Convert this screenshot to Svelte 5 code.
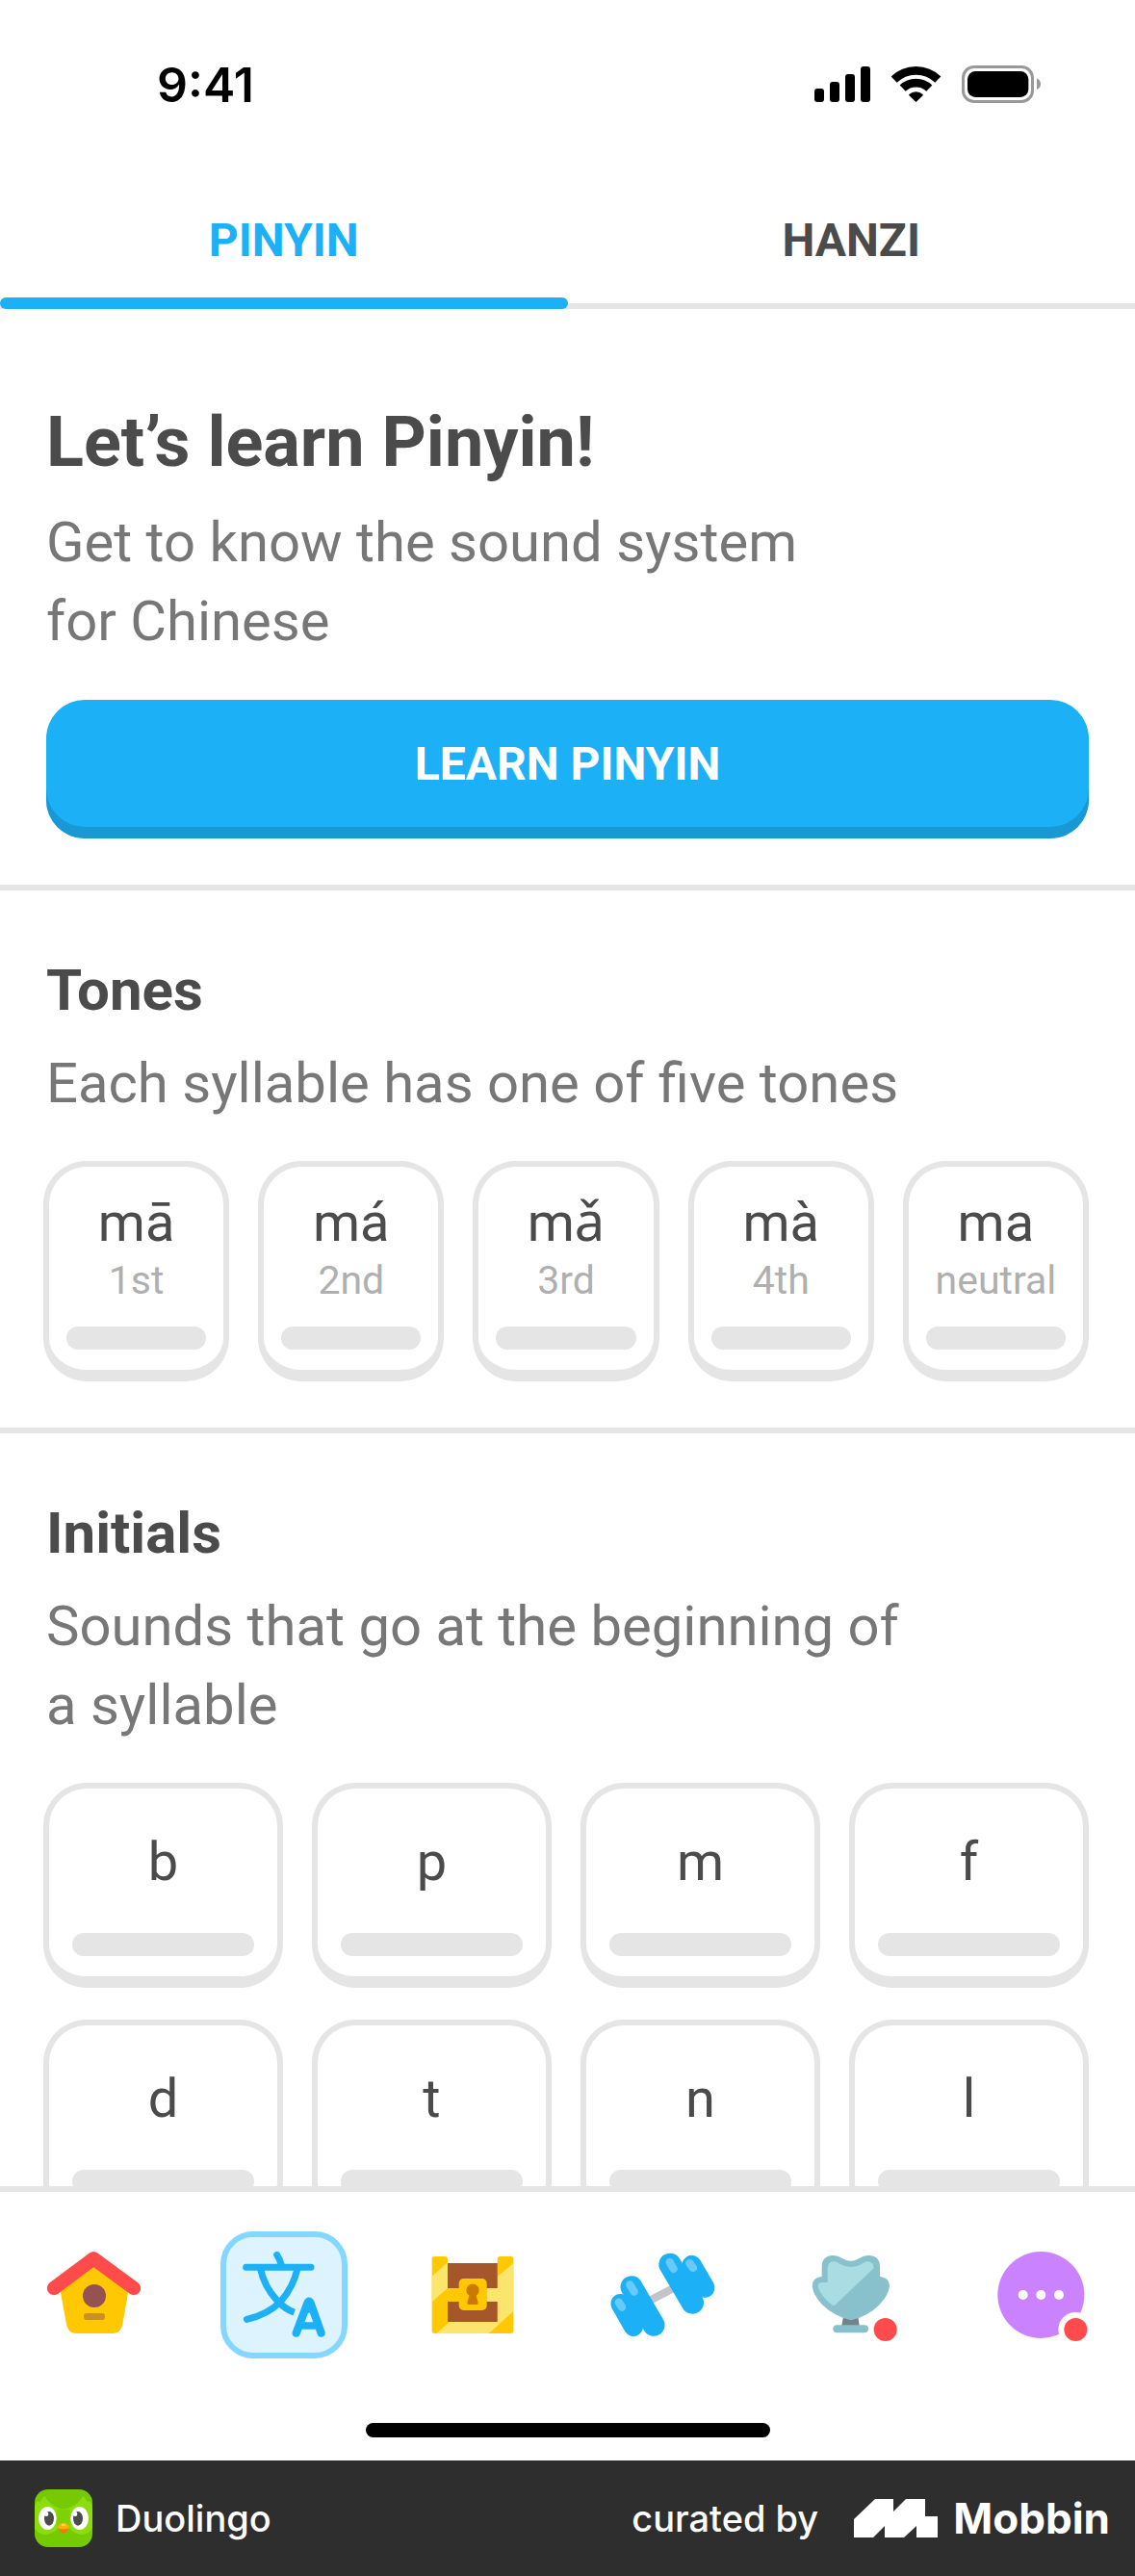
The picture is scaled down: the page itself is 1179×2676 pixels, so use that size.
<script>
  const tones = [
    { syllable: 'mā', label: '1st' },
    { syllable: 'má', label: '2nd' },
    { syllable: 'mǎ', label: '3rd' },
    { syllable: 'mà', label: '4th' },
    { syllable: 'ma', label: 'neutral' }
  ];
  const initials = ['b', 'p', 'm', 'f', 'd', 't', 'n', 'l'];
</script>

<div class="screen">
  <header class="status">
    <span class="time">9:41</span>
    <svg class="status-icons" viewBox="48 54 708 118" aria-hidden="true">
      <rect x="48" y="126" width="30" height="42" rx="9" />
      <rect x="96" y="105" width="30" height="63" rx="9" />
      <rect x="144" y="81" width="30" height="87" rx="9" />
      <rect x="192" y="57" width="30" height="111" rx="9" />
      <g fill="none" stroke="#000" stroke-width="26">
        <path d="M296 98A98 98 0 0 1 433 98" />
        <path d="M323 125A60 60 0 0 1 406 125" />
      </g>
      <path d="M364.500 165L345 146A28 28 0 0 1 384 146Z" stroke="#000" stroke-width="5" stroke-linejoin="round" />
      <rect x="511.500" y="58.500" width="216" height="108" rx="34" fill="none" stroke="#999" stroke-width="9" />
      <rect x="525" y="72" width="190" height="81" rx="25" />
      <path d="M741 94Q753 100 753 112Q753 124 741 129Z" fill="#999" />
    </svg>
  </header>

  <nav class="tabs" aria-label="Writing system">
    <button class="tab active" aria-current="true">PINYIN</button>
    <button class="tab">HANZI</button>
  </nav>

  <main>
    <section class="intro">
      <h1>Let’s learn Pinyin!</h1>
      <p>Get to know the sound system<br />for Chinese</p>
      <button class="primary">LEARN PINYIN</button>
    </section>

    <section>
      <h2>Tones</h2>
      <p>Each syllable has one of five tones</p>
      <div class="grid five">
        {#each tones as tone}
          <button class="card tone">
            <span class="syllable">{tone.syllable}</span>
            <span class="label">{tone.label}</span>
            <span class="progress"></span>
          </button>
        {/each}
      </div>
    </section>

    <section>
      <h2>Initials</h2>
      <p>Sounds that go at the beginning of<br />a syllable</p>
      <div class="grid four">
        {#each initials as letter}
          <button class="card initial">
            <span class="syllable">{letter}</span>
            <span class="progress"></span>
          </button>
        {/each}
      </div>
    </section>
  </main>

  <div class="bottom">
    <nav class="bar" aria-label="Main">
      <button class="item" aria-label="Learn">
        <svg viewBox="96 174 396 396">
          <path d="M188 360L292 275L400 360L382 463Q377 492 352 492H237Q212 492 207 463Z" fill="#ffc800" />
          <path d="M168 351L291.500 259L417 351" fill="none" stroke="#ff4b4b" stroke-width="43" stroke-linecap="round" stroke-linejoin="round" />
          <circle cx="294" cy="375" r="36" fill="#945252" />
          <rect x="261" y="429" width="66" height="21" rx="10" fill="#c98f29" />
        </svg>
      </button>
      <button class="item selected" aria-label="Characters" aria-current="page">
        <svg viewBox="705 192 360 360">
          <g fill="none" stroke="#1cb0f6" stroke-width="21" stroke-linecap="round" stroke-linejoin="round">
            <path d="M767 286H969" />
            <path d="M863 247Q873 262 877 280" />
            <path d="M927 290Q914 346 876 391Q836 433 769 448" />
          </g>
          <path d="M811 288Q823 346 864 390Q888 416 917 427" fill="none" stroke="#1cb0f6" stroke-width="21" />
          <g fill="none" stroke="#1cb0f6" stroke-linecap="round" stroke-linejoin="round">
            <path d="M923 491L958 398Q963 386 968 398L1001 491" stroke-width="25" />
            <path d="M938 468H988" stroke-width="22" />
          </g>
          <path d="M950 402L963 392L976 402L968 428H958Z" fill="#1cb0f6" />
        </svg>
      </button>
      <button class="item" aria-label="Quests">
        <svg viewBox="76 174 396 396">
          <path d="M156 252H187Q196 252 196 261V273H351V261Q351 252 360 252H392Q401 252 401 261V483Q401 492 392 492H156Q147 492 147 483V261Q147 252 156 252Z" fill="#ffc800" />
          <path d="M147 314L196 271V351L147 394ZM351 315L401 273V423L324 492H161L202 456H351V393H318V351H351Z" fill="#fbe56d" />
          <path d="M196 273H351V351H196ZM196 393H351V456H196Z" fill="#a5572b" />
          <rect x="231" y="321" width="87" height="99" rx="15" fill="#ffc800" />
          <path d="M263 374A20 20 0 1 1 285 374L291 396Q292 402 286 402H262Q256 402 257 396Z" fill="#cd7900" />
        </svg>
      </button>
      <button class="item" aria-label="Practice">
        <svg viewBox="665 174 396 396">
          <path d="M820 392L905 347" stroke="#c4c3c9" stroke-width="25" />
          <g stroke="#1cb0f6" stroke-linecap="round">
            <path d="M767 347L836 466" stroke-width="69" />
            <path d="M732 399L773 471" stroke-width="60" />
            <path d="M887 277L957 396" stroke-width="70" />
            <path d="M955 279L996 350" stroke-width="61" />
            <path d="M790 440L800 455M970 350L975 360" stroke-width="30" />
          </g>
          <g stroke="#68caf9" stroke-linecap="round" stroke-width="25">
            <path d="M762 340L775 362" />
            <path d="M727 395L737 410" />
            <path d="M886 270L898 291" />
            <path d="M948 273L959 288" />
          </g>
        </svg>
      </button>
      <button class="item" aria-label="Leagues">
        <svg viewBox="118 174 396 396">
          <path d="M292 440H338L342 468H287Z" fill="#6f8388" />
          <path d="M225 315V285Q225 249 261 249Q275 249 290 259Q315 274 340 259Q355 249 370 249Q406 249 406 285V315Q436 318 436 345Q432 374 405 402Q368 440 316 451Q262 438 226 402Q198 372 195 345Q195 318 225 315Z" fill="#88c0cb" />
          <path d="M243 333V289Q244 268 262 268Q270 268 281 275Q316 295 350 275Q360 268 370 268Q386 270 387 289L267 403Q261 408 256 403Q222 377 213 346Q212 334 225 333Z" fill="#aadde3" />
          <rect x="260" y="466" width="110" height="24" rx="12" fill="#88c0cb" />
          <circle cx="423" cy="480" r="36" fill="#ff4b4b" />
        </svg>
      </button>
      <button class="item" aria-label="More">
        <svg viewBox="707 174 396 396">
          <circle cx="906" cy="372" r="135" fill="#cb82ff" />
          <g fill="#fff">
            <circle cx="850" cy="372" r="15" />
            <circle cx="906" cy="372" r="15" />
            <circle cx="962" cy="372" r="15" />
            <circle cx="1014" cy="480" r="54" />
          </g>
          <circle cx="1014" cy="480" r="36" fill="#ff4b4b" />
        </svg>
      </button>
    </nav>
    <div class="home"></div>
  </div>

  <footer>
    <svg class="owl" viewBox="30 30 180 180" aria-hidden="true">
      <defs>
        <clipPath id="tile"><rect x="30" y="30" width="180" height="180" rx="42" /></clipPath>
      </defs>
      <g clip-path="url(#tile)">
        <path d="M30 30H210V210H30Z" fill="#75ca02" />
        <path d="M30 84L38 66L46 70L60 50Q82 84 108 89Q120 92 132 89Q158 84 182 50L194 70L202 66L210 84V152Q190 178 162 168Q148 164 138 150H102Q92 164 78 168Q50 178 30 152Z" fill="#8bdd0c" />
        <path d="M100 92H140V150H100Z" fill="#7ed104" />
        <ellipse cx="70" cy="120" rx="28" ry="36" fill="#fff" />
        <ellipse cx="170" cy="120" rx="28" ry="36" fill="#fff" />
        <ellipse cx="75" cy="121" rx="15" ry="22" fill="#4b4b4b" />
        <ellipse cx="165" cy="121" rx="15" ry="22" fill="#4b4b4b" />
        <circle cx="66" cy="107" r="7" fill="#fff" />
        <circle cx="156" cy="107" r="7" fill="#fff" />
        <path d="M105 150Q120 144 135 150L132 160Q120 174 108 160Z" fill="#f47b08" />
        <path d="M101 150Q106 134 120 134Q134 134 139 150Q120 158 101 150Z" fill="#ffb100" />
        <ellipse cx="120" cy="141" rx="7" ry="4" fill="#ffd35c" />
      </g>
    </svg>
    <span class="app">Duolingo</span>
    <span class="curated">curated by</span>
    <svg class="mark" viewBox="0 0 87 40" aria-hidden="true">
      <path d="M0 21L22 0H41V13L54 0H74V18H87V40H65V28L52 40H32V28L20 40H0Z" fill="#fff" />
    </svg>
    <span class="brand">Mobbin</span>
  </footer>
</div>

<style>
  :global(body) {
    margin: 0;
    background: #fff;
  }

  .screen {
    display: flex;
    flex-direction: column;
    height: 100vh;
    font-family: Roboto, 'Noto Sans', sans-serif;
    color: #4b4b4b;
    overflow: hidden;
  }

  button {
    margin: 0;
    padding: 0;
    border: 0;
    background: none;
    color: inherit;
    font: inherit;
    cursor: pointer;
  }

  svg {
    display: block;
  }

  .status {
    flex: none;
    display: flex;
    align-items: center;
    justify-content: space-between;
    height: 176px;
    padding: 0 97px 0 163px;
    color: #000;
  }

  .time {
    font: 600 50px/60px Inter, sans-serif;
  }

  .status-icons {
    width: 236px;
  }

  .tabs {
    flex: none;
    display: grid;
    grid-template-columns: 1fr 1fr;
    border-bottom: 6px solid #e5e5e5;
  }

  .tab {
    display: flex;
    flex-direction: column;
    align-items: center;
    padding-top: 46px;
    font-size: 48px;
    font-weight: 700;
    line-height: 56px;
  }

  .tab::after {
    content: '';
    align-self: stretch;
    height: 12px;
    margin: 31px 0 -6px;
    border-radius: 6px;
  }

  .tab.active {
    color: #1cb0f6;
  }

  .tab.active::after {
    background: #1cb0f6;
  }

  main {
    flex: 1;
    min-height: 0;
    overflow: hidden;
  }

  section {
    padding: 69px 48px 48px;
    border-bottom: 6px solid #e5e5e5;
  }

  .intro {
    padding-top: 97px;
  }

  h1,
  h2,
  p {
    margin: 0;
  }

  h1 {
    font-size: 72px;
    line-height: 84px;
  }

  h2 {
    font-size: 60px;
    line-height: 70px;
  }

  p {
    margin-top: 20px;
    color: #777;
    font-size: 58px;
    line-height: 82px;
  }

  .primary {
    width: 100%;
    height: 144px;
    margin-top: 41px;
    border-radius: 40px;
    background: #1cb0f6;
    box-shadow: inset 0 -12px #1899d6;
    padding-bottom: 12px;
    color: #fff;
    font-size: 48px;
    font-weight: 700;
  }

  .grid {
    display: grid;
    gap: 33px 30px;
    margin: 40px 0 0 -3px;
  }

  .five {
    grid-template-columns: repeat(5, minmax(0, 1fr));
  }

  .four {
    grid-template-columns: repeat(4, minmax(0, 1fr));
  }

  .card {
    display: flex;
    flex-direction: column;
    align-items: center;
    border: 6px solid #e5e5e5;
    border-bottom-width: 12px;
    border-radius: 45px;
  }

  .tone {
    padding: 26px 18px 21px;
  }

  .initial {
    padding: 44px 24px 21px;
  }

  .syllable {
    font-size: 56px;
    line-height: 64px;
  }

  .label {
    margin-top: 6px;
    color: #afafaf;
    font-size: 41px;
    line-height: 44px;
  }

  .progress {
    align-self: stretch;
    height: 24px;
    margin-top: 26px;
    border-radius: 12px;
    background: #e5e5e5;
  }

  .initial .progress {
    margin-top: 42px;
  }

  .bottom {
    flex: none;
    border-top: 6px solid #e5e5e5;
    padding: 41px 0 24px;
    background: #fff;
  }

  .bar {
    display: grid;
    grid-template-columns: repeat(6, 1fr);
    justify-items: center;
  }

  .item {
    width: 132px;
    height: 132px;
  }

  .selected {
    box-sizing: border-box;
    border: 6px solid #84d8ff;
    border-radius: 34px;
    background: #ddf4ff;
  }

  .home {
    width: 420px;
    height: 15px;
    margin: 67px auto 0;
    border-radius: 8px;
    background: #000;
  }

  footer {
    flex: none;
    display: flex;
    align-items: center;
    height: 120px;
    padding: 0 26px 0 36px;
    background: #2e2e2e;
    color: #fff;
    font-family: Inter, sans-serif;
    font-size: 38px;
    font-weight: 500;
  }

  .owl {
    width: 60px;
  }

  .app {
    margin-left: 24px;
  }

  .curated {
    margin-left: auto;
  }

  .mark {
    width: 87px;
    margin-left: 37px;
  }

  .brand {
    margin-left: 16px;
    font-size: 44px;
    font-weight: 700;
  }
</style>
